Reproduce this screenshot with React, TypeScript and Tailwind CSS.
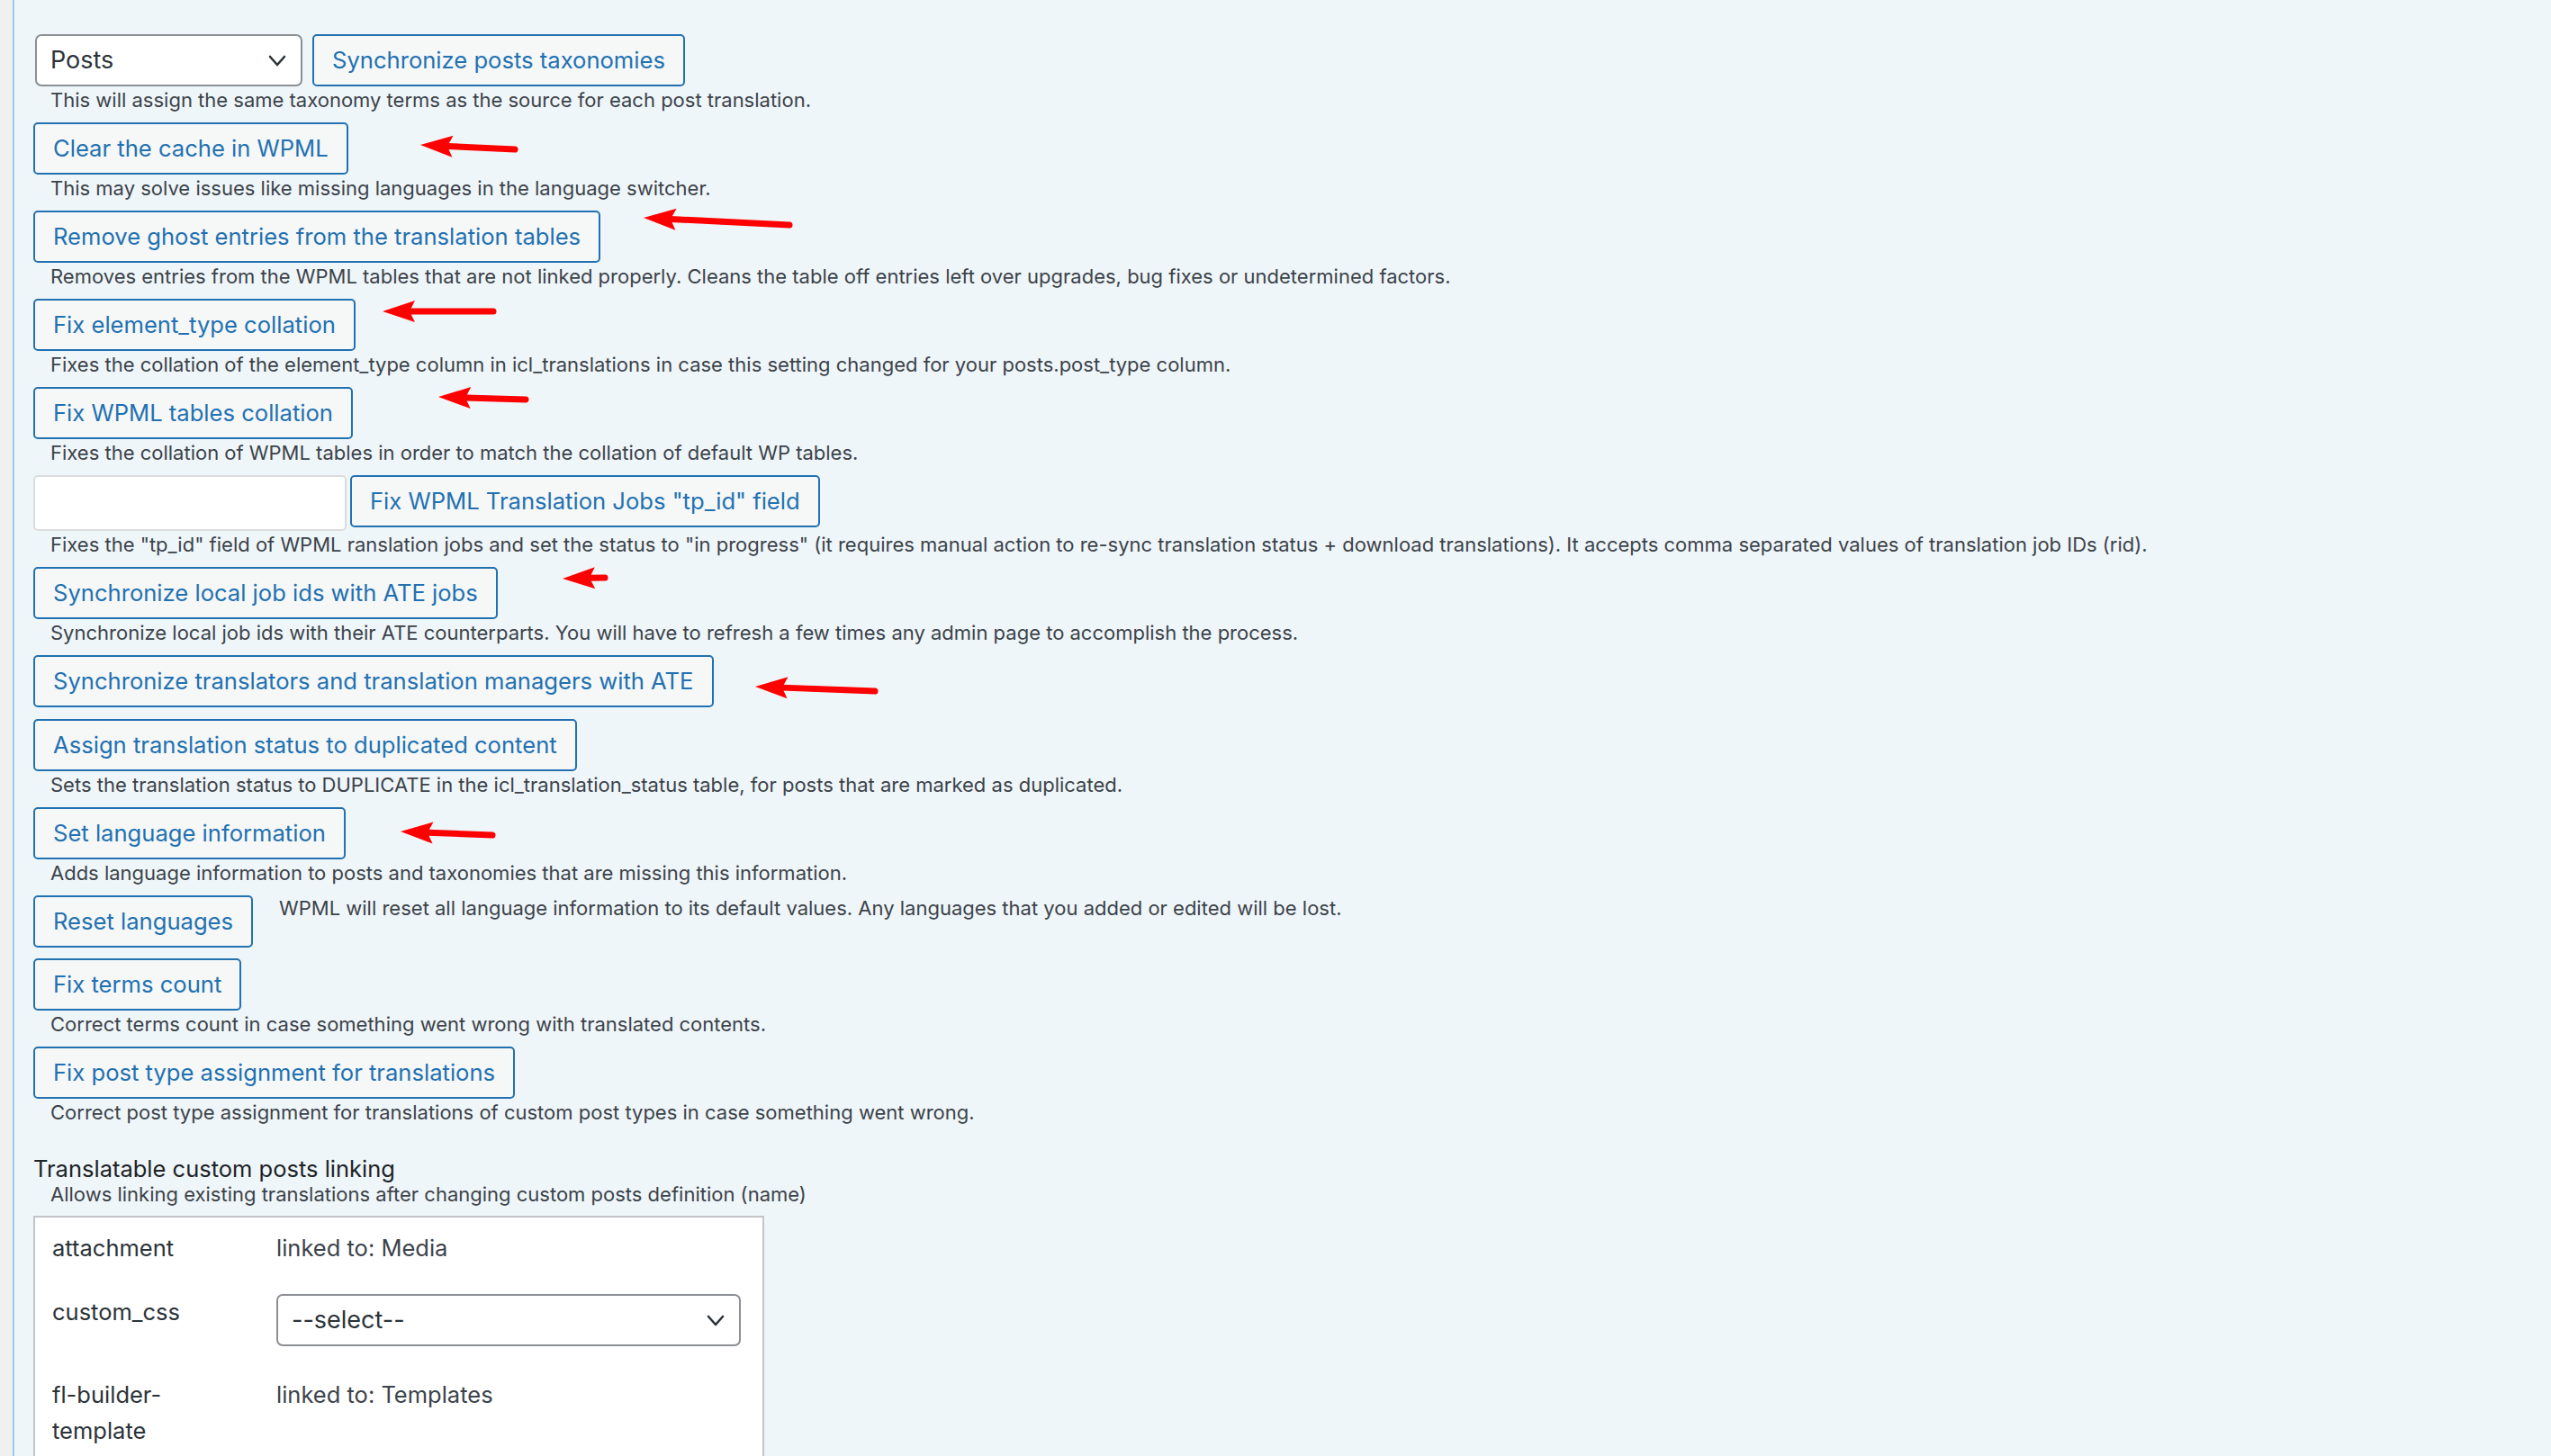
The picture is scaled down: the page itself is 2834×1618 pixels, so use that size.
import React from "react";

type Row = { label: string; desc?: string };

const rowsTop: Row[] = [
  { label: "Clear the cache in WPML", desc: "This may solve issues like missing languages in the language switcher." },
  {
    label: "Remove ghost entries from the translation tables",
    desc: "Removes entries from the WPML tables that are not linked properly. Cleans the table off entries left over upgrades, bug fixes or undetermined factors.",
  },
  {
    label: "Fix element_type collation",
    desc: "Fixes the collation of the element_type column in icl_translations in case this setting changed for your posts.post_type column.",
  },
  { label: "Fix WPML tables collation", desc: "Fixes the collation of WPML tables in order to match the collation of default WP tables." },
];

const rowsMiddle: Row[] = [
  {
    label: "Synchronize local job ids with ATE jobs",
    desc: "Synchronize local job ids with their ATE counterparts. You will have to refresh a few times any admin page to accomplish the process.",
  },
  { label: "Synchronize translators and translation managers with ATE" },
  {
    label: "Assign translation status to duplicated content",
    desc: "Sets the translation status to DUPLICATE in the icl_translation_status table, for posts that are marked as duplicated.",
  },
  { label: "Set language information", desc: "Adds language information to posts and taxonomies that are missing this information." },
];

const rowsBottom: Row[] = [
  { label: "Fix terms count", desc: "Correct terms count in case something went wrong with translated contents." },
  {
    label: "Fix post type assignment for translations",
    desc: "Correct post type assignment for translations of custom post types in case something went wrong.",
  },
];

// tip x, tip y, tail x, tail y
const arrows = [
  [467, 161, 572, 166],
  [715, 242, 877, 250],
  [425, 346, 548, 346],
  [487, 441, 584, 444],
  [625, 643, 672, 642],
  [839, 763, 972, 768],
  [445, 924, 547, 928],
];

const WpButton = ({ label }: { label: string }) => (
  <button className="flex h-[58px] shrink-0 items-center whitespace-nowrap rounded-[5px] border-2 border-[#2271b1] bg-[#f6f7f7] px-[20px] text-[25.6px] text-[#2271b1]">
    {label}
  </button>
);

const Desc = ({ children, className = "h-[30px] leading-[30px]" }: { children: React.ReactNode; className?: string }) => (
  <div className={`ml-[19px] whitespace-nowrap text-[22px] text-[#3c434a] ${className}`}>{children}</div>
);

const Chevron = () => (
  <svg width="20" height="13" viewBox="0 0 20 13" fill="none">
    <polyline points="2,2 10,11 18,2" stroke="#2c3338" strokeWidth="2.6" strokeLinecap="round" strokeLinejoin="round" />
  </svg>
);

const Select = ({ value, className }: { value: string; className: string }) => (
  <div
    className={`flex h-[58px] items-center justify-between rounded-[7px] border-2 border-[#8c8f94] bg-white pl-[15px] pr-[16px] text-[27px] text-[#2c3338] ${className}`}
  >
    <span>{value}</span>
    <Chevron />
  </div>
);

const ToolRow = ({ row }: { row: Row }) => (
  <div className={`flex flex-col items-start ${row.desc ? "mb-[10px]" : "mb-[13px]"}`}>
    <WpButton label={row.label} />
    {row.desc && <Desc>{row.desc}</Desc>}
  </div>
);

const Arrow = ({ a }: { a: number[] }) => {
  const [x1, y1, x2, y2] = a;
  const len = Math.hypot(x2 - x1, y2 - y1);
  const ux = (x2 - x1) / len;
  const uy = (y2 - y1) / len;
  const px = -uy;
  const py = ux;
  const hl = 36;
  const hw = 12;
  const bx = x1 + ux * hl;
  const by = y1 + uy * hl;
  const nx = x1 + ux * (hl - 6);
  const ny = y1 + uy * (hl - 6);
  return (
    <g>
      <line x1={nx} y1={ny} x2={x2} y2={y2} stroke="#ff0000" strokeWidth={7} strokeLinecap="round" />
      <polygon
        fill="#ff0000"
        points={`${x1},${y1} ${bx + px * hw},${by + py * hw} ${nx},${ny} ${bx - px * hw},${by - py * hw}`}
      />
    </g>
  );
};

const App = () => {
  return (
    <div className="relative flex h-[1618px] w-full overflow-hidden bg-[#eff6f9] font-['Inter',sans-serif]">
      <div className="w-[14px] shrink-0 bg-[#f0f0f1]" />
      <div className="w-[2px] shrink-0 bg-[#98cbed]" />

      <div className="flex-1 pl-[21px] pt-[38px]">
        {/* taxonomy sync */}
        <div className="mb-[10px] flex flex-col items-start">
          <div className="flex items-start gap-[11px]">
            <Select value="Posts" className="ml-[2px] w-[297px]" />
            <WpButton label="Synchronize posts taxonomies" />
          </div>
          <Desc>This will assign the same taxonomy terms as the source for each post translation.</Desc>
        </div>

        {rowsTop.map((r) => (
          <ToolRow key={r.label} row={r} />
        ))}

        {/* tp_id field */}
        <div className="mb-[10px] flex flex-col items-start">
          <div className="flex items-start gap-[4px]">
            <input className="h-[62px] w-[348px] rounded-[5px] border-2 border-[#dcdcde] bg-white" />
            <WpButton label='Fix WPML Translation Jobs "tp_id" field' />
          </div>
          <Desc>
            Fixes the "tp_id" field of WPML ranslation jobs and set the status to "in progress" (it requires manual
            action to re-sync translation status + download translations). It accepts comma separated values of
            translation job IDs (rid).
          </Desc>
        </div>

        {rowsMiddle.map((r) => (
          <ToolRow key={r.label} row={r} />
        ))}

        <div className="mb-[12px] flex items-start gap-[29px]">
          <WpButton label="Reset languages" />
          <div className="whitespace-nowrap text-[22px] leading-[28px] text-[#3c434a]">
            WPML will reset all language information to its default values. Any languages that you added or edited will
            be lost.
          </div>
        </div>

        {rowsBottom.map((r) => (
          <ToolRow key={r.label} row={r} />
        ))}

        {/* custom posts linking */}
        <div className="mt-[32px] text-[25.5px] leading-[32px] text-[#1d2327]">Translatable custom posts linking</div>
        <Desc className="h-[24px] leading-[24px]">
          Allows linking existing translations after changing custom posts definition (name)
        </Desc>

        <div className="mt-[12px] w-[812px] border-2 border-[#c3c4c7] bg-white px-[19px] pb-[60px] pt-[14px] text-[25.5px] leading-[40px] text-[#2c3338]">
          <div className="grid grid-cols-[180px_1fr] gap-x-[69px]">
            <div className="pb-[15px]">attachment</div>
            <div className="pb-[15px] text-[#3c434a]">linked to: Media</div>

            <div className="pb-[17px] pt-[16px]">custom_css</div>
            <div className="pb-[17px] pt-[16px]">
              <Select value="--select--" className="w-[516px]" />
            </div>

            <div className="w-[150px] pt-[17px]">fl-builder-template</div>
            <div className="pt-[17px] text-[#3c434a]">linked to: Templates</div>
          </div>
        </div>
      </div>

      <svg className="pointer-events-none absolute left-0 top-0" width="2834" height="1618" viewBox="0 0 2834 1618">
        {arrows.map((a, i) => (
          <Arrow key={i} a={a} />
        ))}
      </svg>
    </div>
  );
};

export default App;
